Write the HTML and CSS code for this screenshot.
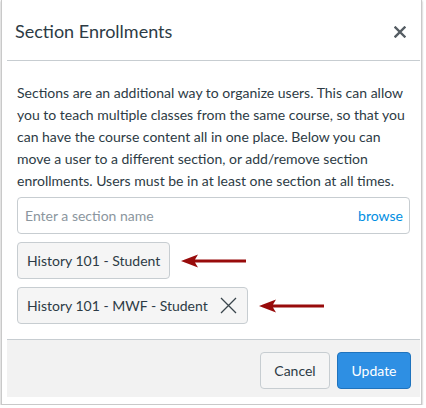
FILE: index.html
```html
<!DOCTYPE html>
<html>
<head>
<meta charset="utf-8">
<link rel="stylesheet" href="styles.css">
</head>
<body>
<div class="frame">
  <div class="dialog">
    <div class="header">
      <h1 class="title">Section Enrollments</h1>
      <svg class="close" width="12" height="12" viewBox="0 0 12 12"><path d="M1.5 1.5 L10.5 10.5 M10.5 1.5 L1.5 10.5" stroke="#555d63" stroke-width="2.4" stroke-linecap="square"/></svg>
    </div>
    <div class="body">
      <p class="intro">Sections are an additional way to organize users. This can allow you to teach multiple classes from the same course, so that you can have the course content all in one place. Below you can move a user to a different section, or add/remove section enrollments. Users must be in at least one section at all times.</p>
      <div class="search">
        <span class="placeholder">Enter a section name</span>
        <span class="browse">browse</span>
      </div>
      <div class="row">
        <div class="chip">History 101 - Student</div>
        <svg class="arrow" width="66" height="14" viewBox="0 0 66 14"><path d="M0 7 L17 0.5 L14 5.5 L65 5.5 L65 8.5 L14 8.5 L17 13.5 Z" fill="#980b0b"/></svg>
      </div>
      <div class="row">
        <div class="chip">History 101 - MWF - Student<svg class="remove" width="17" height="17" viewBox="0 0 17 17"><path d="M1 1 L16 16 M16 1 L1 16" stroke="#3a454c" stroke-width="1.3"/></svg></div>
        <svg class="arrow" width="66" height="14" viewBox="0 0 66 14"><path d="M0 7 L17 0.5 L14 5.5 L65 5.5 L65 8.5 L14 8.5 L17 13.5 Z" fill="#980b0b"/></svg>
      </div>
    </div>
    <div class="footer">
      <button class="btn cancel">Cancel</button>
      <button class="btn update">Update</button>
    </div>
  </div>
</div>
</body>
</html>
```
FILE: styles.css
```css
html, body {
  margin: 0;
  padding: 0;
  background: #ffffff;
}
body {
  font-family: Lato, "Open Sans", sans-serif;
  color: #2d3b45;
}
.frame {
  box-sizing: border-box;
  margin-left: 1px;
  width: 421px;
  height: 405px;
  border: 1px solid #c9c9c9;
  border-top: none;
  box-shadow: 0 1px 2px rgba(0, 0, 0, 0.35);
  padding: 0 1px 7px 5px;
  background: #fff;
}
.dialog {
  height: 100%;
  display: flex;
  flex-direction: column;
}
.header {
  height: 60px;
  border-bottom: 1px solid #c7cdd1;
  display: flex;
  align-items: center;
  justify-content: space-between;
  padding: 0 14px 0 8px;
}
.title {
  margin: 2px 0 0 0;
  font-size: 18px;
  font-weight: 400;
  color: #2d3b45;
}
.close {
  display: block;
  margin-top: 4px;
}
.body {
  flex: 1;
  padding: 0 10px;
}
.intro {
  margin: 21px 0 0 0;
  font-size: 14px;
  line-height: 22px;
  color: #2d3b45;
}
.search {
  box-sizing: border-box;
  margin-top: 5px;
  height: 37px;
  border: 1px solid #c7cdd1;
  border-radius: 4px;
  display: flex;
  align-items: center;
  justify-content: space-between;
  padding: 0 6px 0 7px;
  font-size: 14px;
}
.placeholder {
  color: #8b969e;
}
.browse {
  color: #008ee2;
}
.row {
  display: flex;
  align-items: center;
  gap: 11px;
  margin-top: 8px;
}
.chip {
  box-sizing: border-box;
  height: 37px;
  display: flex;
  align-items: center;
  padding: 0 9px;
  background: #f5f5f5;
  border: 1px solid #c7cdd1;
  border-radius: 4px;
  font-size: 14px;
  color: #2d3b45;
}
.remove {
  display: block;
  margin-left: 12px;
  margin-right: 1px;
}
.arrow {
  display: block;
}
.footer {
  box-sizing: border-box;
  height: 58px;
  background: #f2f2f2;
  border-top: 1px solid #c7cdd1;
  display: flex;
  justify-content: flex-end;
  align-items: flex-start;
  gap: 7px;
  padding: 12px 9px 0 0;
}
.btn {
  box-sizing: border-box;
  height: 37px;
  border-radius: 4px;
  font-family: Lato, "Open Sans", sans-serif;
  font-size: 14px;
  padding: 0;
}
.cancel {
  width: 70px;
  background: #f5f5f5;
  border: 1px solid #c7cdd1;
  color: #2d3b45;
}
.update {
  width: 74px;
  background: #2e8fe3;
  border: 1px solid #1f73bd;
  color: #ffffff;
}
```
